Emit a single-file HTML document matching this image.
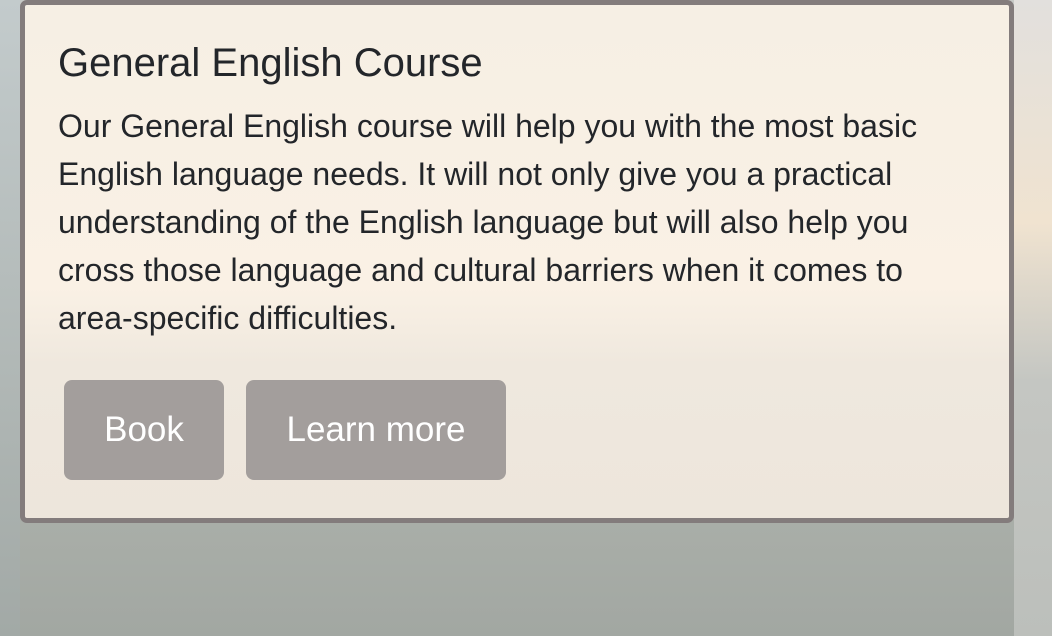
<!DOCTYPE html>
<html><head><meta charset="utf-8"><style>
html,body{margin:0;padding:0;width:1052px;height:636px;overflow:hidden;font-family:"Liberation Sans",Arial,sans-serif}
body{background:linear-gradient(180deg,#c6c9c6 0%,#d4d2cc 35%,#c0c2bc 60%,#a9aea8 82%,#a2a7a2 100%);position:relative}
.bgl{position:absolute;left:0;top:0;width:20px;height:636px;background:linear-gradient(180deg,#c3cbcc,#b0b7b5 60%,#a2a9a6)}
.bgr{position:absolute;right:0;top:0;width:38px;height:636px;background:linear-gradient(180deg,#e2e0dd,#f0e3d0 35%,#c4c6c2 60%,#bcbfbb)}
.card{position:absolute;left:20px;top:0;width:984px;height:513px;border:5px solid #837c7c;border-radius:7px;background:linear-gradient(180deg,#f6efe4 0%,#faf1e5 55%,#efe8de 70%,#ede6dc 100%)}
h1{position:absolute;left:33px;top:34px;margin:0;font-weight:normal;font-size:40px;line-height:48px;color:#23262a}
p{position:absolute;left:33px;top:97px;width:920px;margin:0;font-size:32px;line-height:48px;color:#23262a}
.btn{position:absolute;top:375px;height:100px;background:#a39e9c;border-radius:8px;color:#fff;font-size:35px;line-height:100px;text-align:center}
</style></head><body>
<div class="bgl"></div><div class="bgr"></div>
<div class="card">
<h1>General English Course</h1>
<p>Our General English course will help you with the most basic<br>English language needs. It will not only give you a practical<br>understanding of the English language but will also help you<br>cross those language and cultural barriers when it comes to<br>area-specific difficulties.</p>
<div class="btn" style="left:39px;width:160px">Book</div>
<div class="btn" style="left:221px;width:260px">Learn more</div>
</div>
</body></html>
